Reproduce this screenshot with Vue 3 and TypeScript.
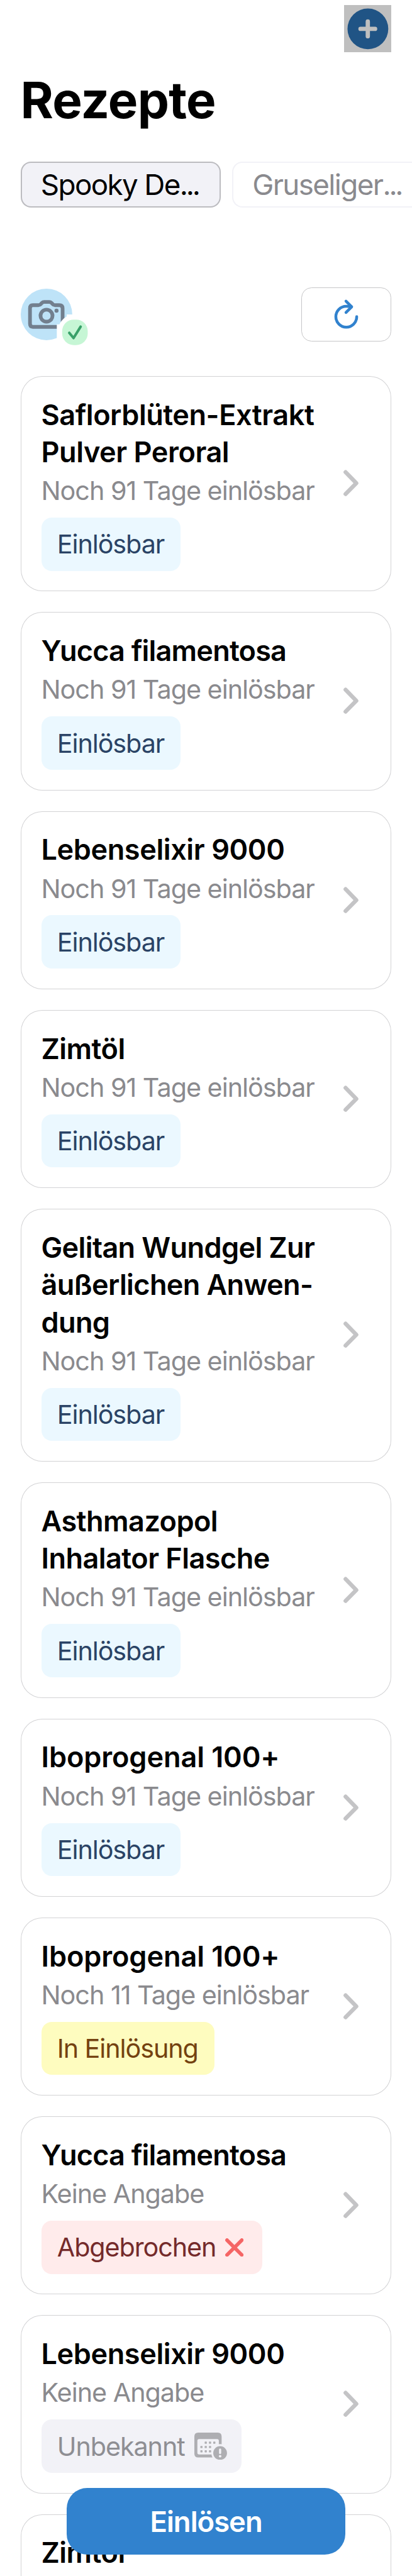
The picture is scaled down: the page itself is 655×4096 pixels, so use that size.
<script setup lang="ts">
type Status = 'ready' | 'progress' | 'cancelled' | 'unknown'

interface Prescription {
  id: number
  title: string[]
  hint: string
  status: Status
  tracking?: string
}

const labels: Record<Status, string> = {
  ready: 'Einlösbar',
  progress: 'In Einlösung',
  cancelled: 'Abgebrochen',
  unknown: 'Unbekannt',
}

const profiles = [
  { name: 'Spooky De', active: true },
  { name: 'Gruseliger', active: false },
]

const prescriptions: Prescription[] = [
  { id: 1, title: ['Saflorblüten-Extrakt', 'Pulver Peroral'], hint: 'Noch 91 Tage einlösbar', status: 'ready', tracking: '-0.01em' },
  { id: 2, title: ['Yucca filamentosa'], hint: 'Noch 91 Tage einlösbar', status: 'ready', tracking: '-0.018em' },
  { id: 3, title: ['Lebenselixir 9000'], hint: 'Noch 91 Tage einlösbar', status: 'ready', tracking: '-0.009em' },
  { id: 4, title: ['Zimtöl'], hint: 'Noch 91 Tage einlösbar', status: 'ready' },
  { id: 5, title: ['Gelitan Wundgel Zur', 'äußerlichen Anwen-', 'dung'], hint: 'Noch 91 Tage einlösbar', status: 'ready', tracking: '-0.014em' },
  { id: 6, title: ['Asthmazopol', 'Inhalator Flasche'], hint: 'Noch 91 Tage einlösbar', status: 'ready' },
  { id: 7, title: ['Iboprogenal 100+'], hint: 'Noch 91 Tage einlösbar', status: 'ready', tracking: '-0.002em' },
  { id: 8, title: ['Iboprogenal 100+'], hint: 'Noch 11 Tage einlösbar', status: 'progress', tracking: '-0.002em' },
  { id: 9, title: ['Yucca filamentosa'], hint: 'Keine Angabe', status: 'cancelled', tracking: '-0.018em' },
  { id: 10, title: ['Lebenselixir 9000'], hint: 'Keine Angabe', status: 'unknown', tracking: '-0.009em' },
  { id: 11, title: ['Zimtöl'], hint: '', status: 'ready' },
]
</script>

<template>
  <main class="screen">
    <header class="toolbar">
      <button class="add" aria-label="Hinzufügen">
        <svg viewBox="0 0 111 111">
          <circle cx="55.5" cy="55.5" r="47.5" fill="#205485" />
          <path d="M38.3 55.5h34M55.3 38.3v34.5" stroke="#bfbfbf" stroke-width="10" stroke-linecap="round" />
        </svg>
      </button>
    </header>

    <h1 class="heading">Rezepte</h1>

    <nav class="profiles">
      <button v-for="p in profiles" :key="p.name" class="chip" :class="{ active: p.active }">
        <span>{{ p.name }}<span class="dots">...</span></span>
      </button>
    </nav>

    <section class="actions">
      <svg class="avatar" viewBox="0 0 170 144">
        <circle cx="60" cy="60" r="60" fill="#bee3f8" />
        <g fill="none" stroke="#727f8e" stroke-width="8.6" stroke-linejoin="round">
          <path d="M28 38.5h13c3 0 4.500-1 6-2.800l2.500-2.700c1.500-1.500 3-2 5-2h12c2 0 3.500.5 5 2l2.500 2.700c1.500 1.800 3 2.800 6 2.800h10c5 0 7.500 2.500 7.500 7.500v35.500c0 5-2.500 7.500-7.500 7.500h-62c-4.500 0-6.500-2.500-6.500-7.500v-35.500c0-5 2-7.500 6.500-7.500z" />
          <circle cx="60" cy="63" r="14" />
        </g>
        <circle cx="83.300" cy="51.300" r="4.700" fill="#727f8e" />
        <path d="M84 115V83h6Q96 71 107 65v-5h16v84H95Z" fill="#fff" />
        <rect x="96.500" y="72" width="59.500" height="59.500" rx="27" fill="#c6f6d5" />
        <path d="M113 103l10 12 16.500-26.500" fill="none" stroke="#38a169" stroke-width="6" stroke-linecap="round" stroke-linejoin="round" />
      </svg>
      <button class="refresh" aria-label="Aktualisieren">
        <svg viewBox="0 0 66 78">
          <g fill="none" stroke="#3182ce" stroke-width="6.600" stroke-linecap="round" stroke-linejoin="round">
            <path d="M57.300 44.800a24.300 24.300 0 1 1-24.300-24.300q4 0 12 1.200" />
            <path d="M32.300 8.700l13.300 13-13.300 13.300" />
          </g>
        </svg>
      </button>
    </section>

    <ul class="list">
      <li v-for="item in prescriptions" :key="item.id" class="card">
        <div class="body">
          <h2 class="title" :style="{ letterSpacing: item.tracking }">
            <span v-for="line in item.title" :key="line">{{ line }}</span>
          </h2>
          <template v-if="item.hint">
            <p class="hint">{{ item.hint }}</p>
            <div class="badge" :class="item.status">
              <span>{{ labels[item.status] }}</span>
              <svg v-if="item.status === 'cancelled'" class="cross" viewBox="0 0 43 43">
                <path d="M4.300 4.300l34.400 34.400M38.700 4.300L4.300 38.700" stroke="#f56565" stroke-width="8.400" stroke-linecap="round" />
              </svg>
              <svg v-if="item.status === 'unknown'" class="calendar" viewBox="0 0 76 64">
                <g fill="#aeaeb2">
                  <path fill-rule="evenodd" d="M9 0h45.500q9 0 9 9v18q-4-.8-6.500 0V19q0-4-4-4H11q-4 0-4 4v28q0 4 4 4h29q0 4 2.300 7H9q-9 0-9-9V9q0-9 9-9z" />
                  <rect x="24" y="21" width="5" height="5" rx="1" />
                  <rect x="34" y="21" width="5" height="5" rx="1" />
                  <rect x="44" y="21" width="5" height="5" rx="1" />
                  <rect x="14" y="31" width="5" height="5" rx="1" />
                  <rect x="24" y="31" width="5" height="5" rx="1" />
                  <rect x="34" y="31" width="5" height="5" rx="1" />
                  <rect x="14" y="41" width="5" height="5" rx="1" />
                  <rect x="24" y="41" width="5" height="5" rx="1" />
                  <rect x="34" y="41" width="5" height="5" rx="1" />
                  <circle cx="60" cy="47.500" r="16" />
                </g>
                <path d="M60 39.500v8" stroke="#f2f2f7" stroke-width="5" stroke-linecap="round" />
                <circle cx="60" cy="55" r="3" fill="#f2f2f7" />
              </svg>
            </div>
          </template>
        </div>
        <svg v-if="item.hint" class="chevron" viewBox="0 0 36 62">
          <path d="M5 5.500L30 31 5 56.500" fill="none" stroke="#c4c4c6" stroke-width="9.500" stroke-linecap="round" stroke-linejoin="round" />
        </svg>
      </li>
    </ul>

    <button class="redeem"><span>Einlösen</span></button>
  </main>
</template>

<style>
html {
  font-size: 68.25px;
}
body {
  margin: 0;
  background: #fff;
}
</style>

<style scoped>
.screen {
  position: relative;
  height: 100vh;
  overflow: hidden;
  background: #fff;
  font-family: Inter, "Liberation Sans", sans-serif;
  color: #000;
}
button {
  display: block;
  box-sizing: border-box;
  padding: 0;
  border: 0;
  background: none;
  font: inherit;
  color: inherit;
}
svg {
  display: block;
  flex: none;
}
.toolbar {
  display: flex;
  justify-content: flex-end;
  padding: 0.11rem 0.48rem 0 0;
}
.add {
  width: 1.11rem;
  height: 1.11rem;
  background: #bfbfbf;
}
.add svg {
  width: 100%;
  height: 100%;
}
.heading {
  margin: 0.39rem 0 0 0.475rem;
  font-size: 1.17rem;
  line-height: 1.44rem;
  font-weight: 700;
  letter-spacing: -0.009em;
  white-space: nowrap;
}
.profiles {
  display: flex;
  gap: 0.27rem;
  margin-top: 0.71rem;
  padding-left: 0.48rem;
}
.chip {
  flex: none;
  width: 4.66rem;
  height: 1.07rem;
  padding-left: 0.44rem;
  border: 2px solid #f2f2f7;
  border-radius: 0.24rem;
  font-size: 0.67rem;
  letter-spacing: -0.035em;
  text-align: left;
  white-space: nowrap;
  color: #8a8a8e;
}
.chip.active {
  border-color: #bcbcc0;
  background: #f2f2f7;
  color: #000;
}
.dots {
  letter-spacing: -0.07em;
}
.actions {
  display: flex;
  justify-content: space-between;
  align-items: flex-start;
  margin-top: 1.86rem;
  padding: 0 0.48rem;
}
.avatar {
  width: 1.7rem;
  height: 1.44rem;
  margin-top: 0.03rem;
}
.refresh {
  display: flex;
  justify-content: center;
  align-items: center;
  width: 2.1rem;
  height: 1.26rem;
  border: 1px solid #c6c6c8;
  border-radius: 0.24rem;
}
.refresh svg {
  width: 0.66rem;
  height: 0.78rem;
}
.list {
  display: flex;
  flex-direction: column;
  gap: 0.484rem;
  margin: 0.6rem 0 0;
  padding: 0 0.48rem;
  list-style: none;
}
.card {
  display: flex;
  justify-content: space-between;
  align-items: center;
  box-sizing: border-box;
  padding: 0.465rem 0.76rem 0.48rem 0.48rem;
  box-shadow: inset 0 0 0 1px #d3d3d5;
  border-radius: 0.5rem;
}
.card:last-child {
  padding-bottom: 1rem;
}
.title {
  margin: 0;
  font-size: 0.66rem;
  line-height: 0.87rem;
  font-weight: 600;
  letter-spacing: -0.012em;
  white-space: nowrap;
}
.title span {
  display: block;
}
.hint {
  margin: 0.085rem 0 0;
  font-size: 0.605rem;
  line-height: 0.78rem;
  letter-spacing: -0.0245em;
  color: #8a8a8e;
  white-space: nowrap;
}
.badge {
  display: flex;
  align-items: center;
  height: 1.24rem;
  margin-top: 0.23rem;
  padding: 0 0.37rem;
  box-sizing: border-box;
  border-radius: 0.24rem;
  font-size: 0.605rem;
  letter-spacing: -0.026em;
  white-space: nowrap;
}
.ready {
  width: 3.24rem;
  background: #ebf8ff;
  color: #2a4365;
}
.progress {
  width: 4.03rem;
  background: #fefcbf;
  color: #744210;
}
.cancelled {
  width: 5.15rem;
  justify-content: space-between;
  padding-right: 0.44rem;
  background: #ffebeb;
  color: #742a2a;
}
.unknown {
  width: 4.67rem;
  justify-content: space-between;
  padding-right: 0.34rem;
  background: #f2f2f7;
  color: #8e8e93;
}
.cross {
  width: 0.43rem;
  height: 0.43rem;
}
.calendar {
  width: 0.76rem;
  height: 0.64rem;
}
.chevron {
  width: 0.36rem;
  height: 0.62rem;
}
.redeem {
  position: absolute;
  left: 1.56rem;
  top: 57.96rem;
  width: 6.48rem;
  height: 1.56rem;
  border-radius: 0.48rem;
  background: #3182ce;
  color: #fff;
  font-size: 0.665rem;
  font-weight: 600;
  letter-spacing: -0.022em;
}
</style>
